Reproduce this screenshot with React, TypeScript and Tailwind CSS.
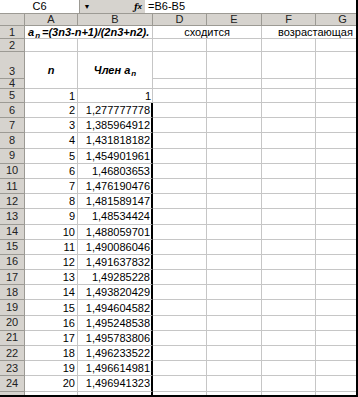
const font = { fontFamily: '"Liberation Sans", Arial, sans-serif' };

const values = [
  "1",
  "1,277777778",
  "1,385964912",
  "1,431818182",
  "1,454901961",
  "1,46803653",
  "1,476190476",
  "1,481589147",
  "1,48534424",
  "1,488059701",
  "1,490086046",
  "1,491637832",
  "1,49285228",
  "1,493820429",
  "1,494604582",
  "1,495248538",
  "1,495783806",
  "1,496233522",
  "1,496614981",
  "1,496941323",
];

const hdr =
  "flex items-center justify-center border-r border-b border-[#9c9a94] bg-[#d6d3ce] text-[11px] leading-none text-[#222]";
const cell = "flex items-center border-r border-b border-[#c6c6c6] bg-white text-[11px] leading-none text-black";

const FormulaBar = () => (
  <div className="flex h-[14px] border-b border-[#9c9a94] bg-[#d6d3ce] text-[11px] leading-none">
    <div className="flex w-[80px] items-center justify-center border-r border-[#9c9a94] bg-white">C6</div>
    <div className="flex w-[14px] items-center justify-center text-[7px]">▼</div>
    <div className="flex w-[51px] items-center justify-end pr-[3px] text-[10px] font-bold italic">
      <span className="font-serif italic">f</span>
      <span className="text-[8px]">x</span>
    </div>
    <div className="flex flex-1 items-center bg-white pl-[3px]">=B6-B5</div>
  </div>
);

const Sub = ({ children }: { children: string }) => (
  <span className="relative top-[2px] ml-[1px] text-[8px]">{children}</span>
);

export default function App() {
  return (
    <div
      className="h-[397px] w-[358px] overflow-hidden border-r-2 border-b-2 border-black bg-white"
      style={font}
    >
      <FormulaBar />
      <div className="grid grid-cols-[25px_53px_75px_54px_55px_54px_54px] grid-rows-[12px_13px_13px_27px_10px_14px_repeat(19,15.2px)_15px]">
        {/* column headers */}
        <div className={hdr} />
        {["A", "B", "D", "E", "F", "G"].map((c) => (
          <div key={c} className={hdr}>
            {c}
          </div>
        ))}

        {/* row 1 */}
        <div className={hdr}>1</div>
        <div className={`${cell} col-span-2 whitespace-nowrap pl-[3px] font-bold italic`}>
          <span>
            a<Sub>n</Sub>
            <span className="ml-[2px]">=(3n3-n+1)/(2n3+n2).</span>
          </span>
        </div>
        <div className={`${cell} col-span-2 justify-center`}>сходится</div>
        <div className={`${cell} col-span-2 justify-center whitespace-nowrap`}>возрастающая</div>

        {/* row 2 */}
        <div className={hdr}>2</div>
        {[0, 1, 2, 3, 4, 5].map((i) => (
          <div key={i} className={cell} />
        ))}

        {/* rows 3-4 */}
        <div className={`${hdr} items-end pb-[1px]`}>3</div>
        <div className={`${cell} row-span-2 justify-center font-bold italic`}>n</div>
        <div className={`${cell} row-span-2 justify-center font-bold italic`}>
          <span>
            Член a<Sub>n</Sub>
          </span>
        </div>
        {[0, 1, 2, 3].map((i) => (
          <div key={i} className={cell} />
        ))}
        <div className={`${hdr} text-[10px]`}>4</div>
        {[0, 1, 2, 3].map((i) => (
          <div key={i} className={cell} />
        ))}

        {/* data rows */}
        {values.map((v, i) => {
          const row = i + 5;
          const selected = row >= 6;
          return (
            <div key={row} className="contents">
              <div className={`${hdr} ${selected ? "bg-[#b6bdd9]" : ""}`}>{row}</div>
              <div className={`${cell} justify-end pr-[2px] pt-[1px]`}>{i + 1}</div>
              <div
                className={`${cell} justify-end pr-[1px] pt-[1px] ${
                  selected ? "border-r-2 border-r-black" : ""
                }`}
              >
                {v}
              </div>
              {[0, 1, 2, 3].map((k) => (
                <div key={k} className={cell} />
              ))}
            </div>
          );
        })}

        {/* row 25, cut off by the frame */}
        <div className={hdr} />
        <div className={cell} />
        <div className={`${cell} border-r-2 border-r-black`} />
        {[0, 1, 2, 3].map((k) => (
          <div key={k} className={cell} />
        ))}
      </div>
    </div>
  );
}
